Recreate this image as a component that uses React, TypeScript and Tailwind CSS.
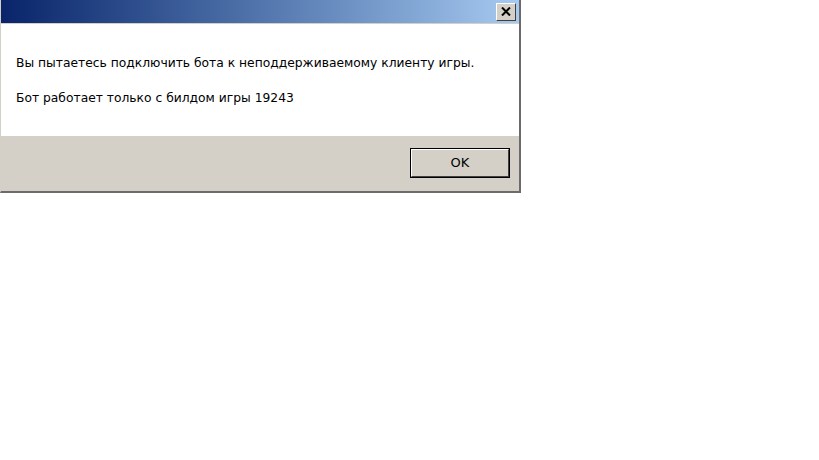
import React from "react";

export default function App() {
  return (
    <div className="w-[819px] h-[460px] bg-white" style={{ fontFamily: '"DejaVu Sans", Tahoma, sans-serif' }}>
      <div className="w-[521px] h-[193px] flex flex-col bg-[#d4d0c8] border-l border-l-[#d4d0c8] border-r-2 border-r-[#6b6b6b] border-b-2 border-b-[#6b6b6b]">
        <div className="h-[23px] shrink-0 flex items-center justify-end pr-[3px] bg-gradient-to-r from-[#0a246a] to-[#a6caf0]">
          <div className="w-[20px] h-[18px] bg-[#d4d0c8] border border-t-white border-l-white border-r-[#404040] border-b-[#404040] flex items-center justify-center">
            <svg width="10" height="9" viewBox="0 0 10 9">
              <path d="M1 0.5 L9 8.5 M9 0.5 L1 8.5" stroke="#000" strokeWidth="2" />
            </svg>
          </div>
        </div>
        <div className="h-[1px] bg-[#d4d0c8]" />
        <div className="h-[112px] shrink-0 bg-white pl-[15px] pt-[32px] text-[12.3px] text-black leading-[15px]">
          <p>Вы пытаетесь подключить бота к неподдерживаемому клиенту игры.</p>
          <p className="mt-[20px]">Бот работает только с билдом игры 19243</p>
        </div>
        <div className="flex-1 flex justify-end items-start pt-[12px] pr-[9px]">
          <div className="w-[100px] h-[30px] border border-black">
            <div className="w-full h-full border border-t-white border-l-white border-r-[#404040] border-b-[#404040] flex items-center justify-center text-[13px] text-black">
              OK
            </div>
          </div>
        </div>
      </div>
    </div>
  );
}
